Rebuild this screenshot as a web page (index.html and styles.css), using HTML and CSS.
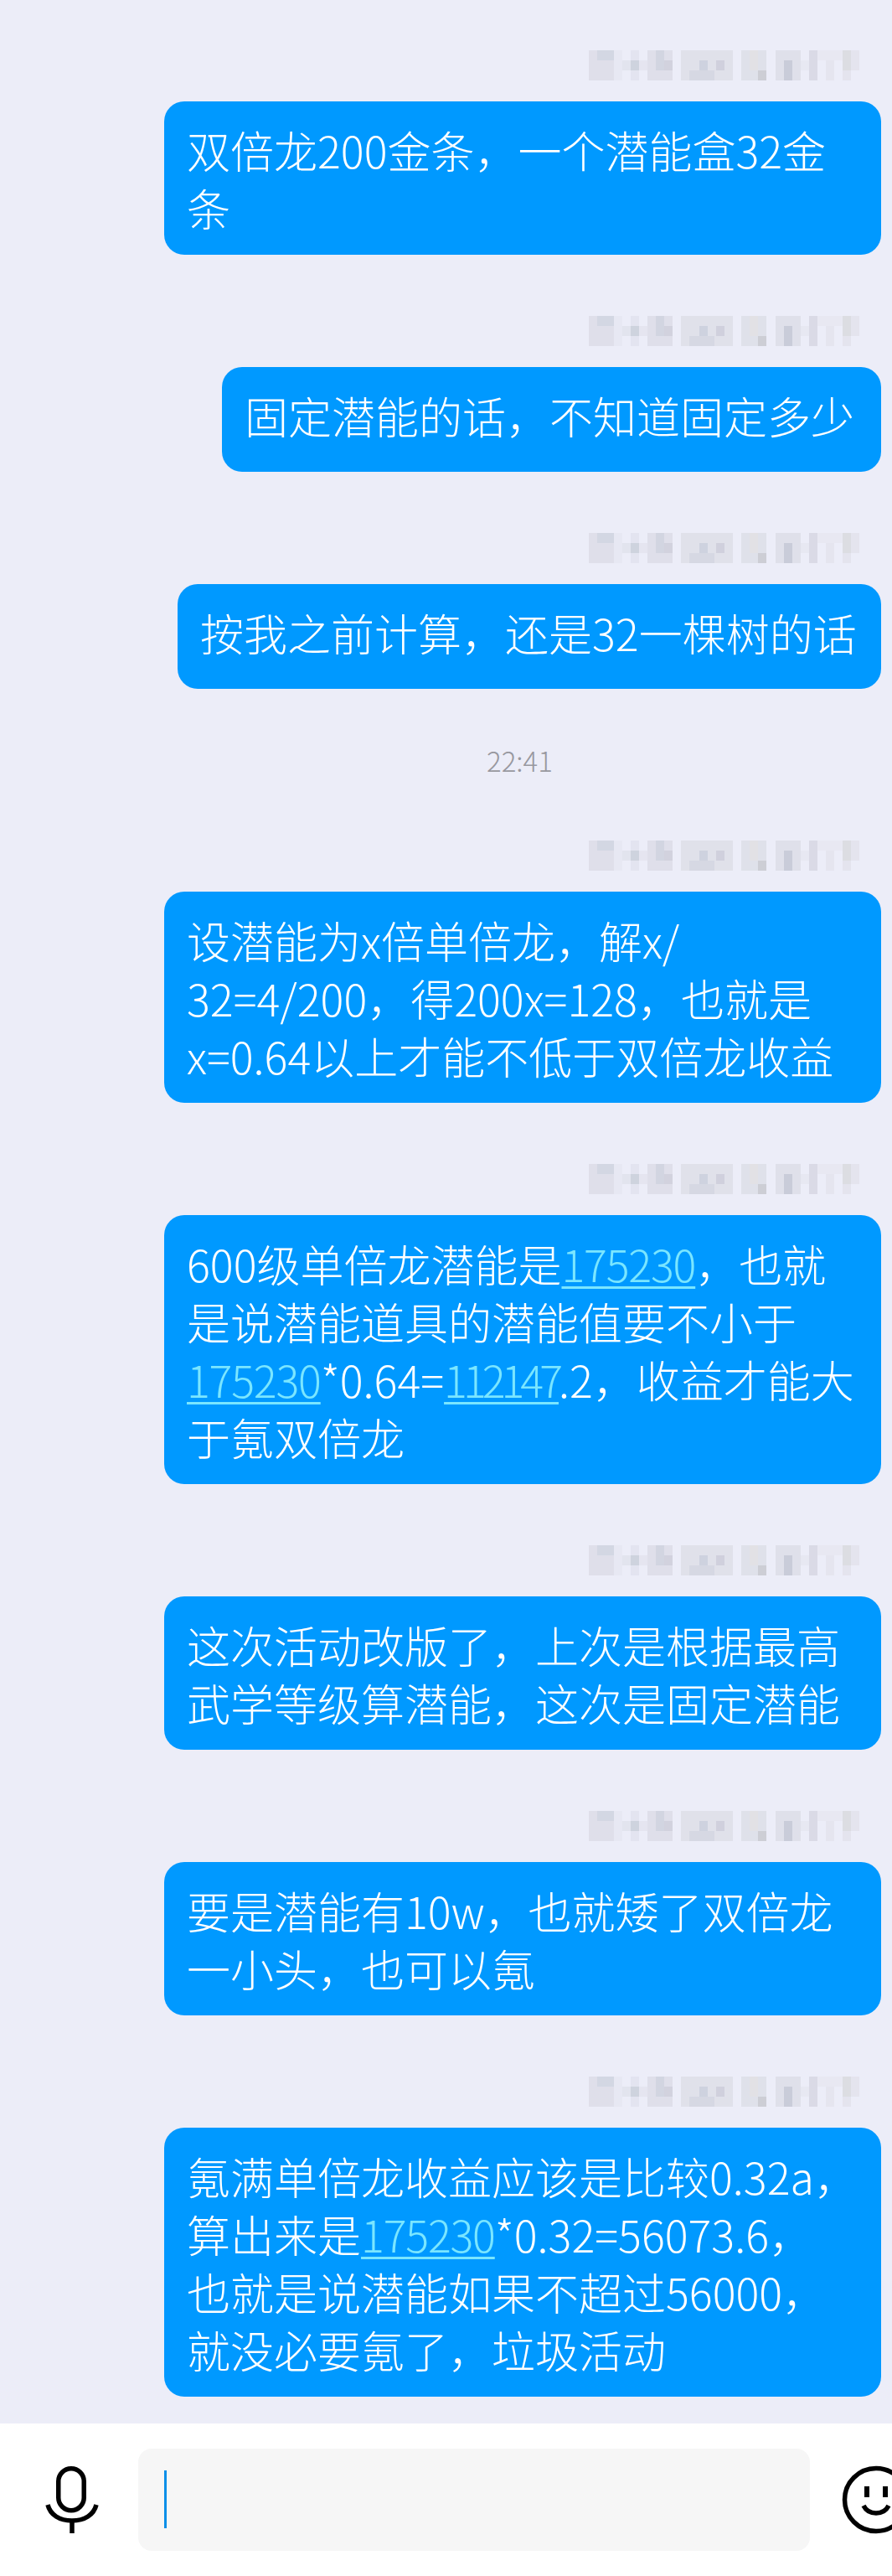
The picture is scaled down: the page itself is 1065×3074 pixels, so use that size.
FILE: index.html
```html
<!DOCTYPE html>
<html lang="zh-CN">
<head>
    <meta charset="UTF-8">
    <title>Chat</title>
    <link rel="stylesheet" href="styles.css">
</head>
<body>
    <svg class="defs" width="0" height="0">
        <symbol id="mosaic" viewBox="0 0 324 36">
            <rect x="0" y="0" width="30" height="36" fill="#dfdfea"/>
            <rect x="10" y="0" width="20" height="12" fill="#d3d7e3"/>
            <rect x="30" y="0" width="10" height="36" fill="#e7e8f3"/>
            <rect x="50" y="0" width="10" height="36" fill="#e3e4f0"/>
            <rect x="40" y="12" width="10" height="12" fill="#e2e4ee"/>
            <rect x="50" y="12" width="10" height="12" fill="#ced3de"/>
            <rect x="60" y="12" width="10" height="12" fill="#e5e5f0"/>
            <rect x="70" y="0" width="30" height="36" fill="#dfdfea"/>
            <rect x="80" y="0" width="10" height="24" fill="#d2d5e1"/>
            <rect x="90" y="12" width="10" height="12" fill="#d2d2de"/>
            <rect x="110" y="0" width="62" height="36" fill="#e0e1ea"/>
            <rect x="120" y="24" width="30" height="12" fill="#d6d8e3"/>
            <rect x="132" y="12" width="10" height="12" fill="#ced2df"/>
            <rect x="152" y="12" width="10" height="12" fill="#d0d0dd"/>
            <rect x="182" y="0" width="30" height="36" fill="#dfe1ea"/>
            <rect x="192" y="0" width="10" height="24" fill="#e2e1e5"/>
            <rect x="202" y="24" width="10" height="12" fill="#cdced5"/>
            <rect x="223" y="0" width="30" height="36" fill="#dfe0ea"/>
            <rect x="233" y="12" width="10" height="24" fill="#c9ccd9"/>
            <rect x="253" y="12" width="10" height="12" fill="#e7e8f2"/>
            <rect x="263" y="0" width="10" height="36" fill="#dadae6"/>
            <rect x="273" y="0" width="50" height="12" fill="#e8e8f2"/>
            <rect x="303" y="0" width="10" height="24" fill="#dcdde2"/>
            <rect x="283" y="12" width="10" height="24" fill="#e5e5ef"/>
            <rect x="303" y="24" width="10" height="12" fill="#e4e4ee"/>
            <rect x="313" y="0" width="10" height="24" fill="#e4e4ee"/>
        </symbol>
    </svg>

    <main class="chat">
        <div class="msg">
            <svg class="mosaic"><use href="#mosaic"/></svg>
            <div class="bubble bubble-wide">双倍龙200金条，一个潜能盒32金<br>条</div>
        </div>
        <div class="msg">
            <svg class="mosaic"><use href="#mosaic"/></svg>
            <div class="bubble bubble-mid">固定潜能的话，不知道固定多少</div>
        </div>
        <div class="msg">
            <svg class="mosaic"><use href="#mosaic"/></svg>
            <div class="bubble bubble-short">按我之前计算，还是32一棵树的话</div>
        </div>

        <div class="time">22:41</div>

        <div class="msg">
            <svg class="mosaic"><use href="#mosaic"/></svg>
            <div class="bubble bubble-wide">设潜能为x倍单倍龙，解x/<br>32=4/200，得200x=128，也就是<br>x=0.64以上才能不低于双倍龙收益</div>
        </div>
        <div class="msg">
            <svg class="mosaic"><use href="#mosaic"/></svg>
            <div class="bubble bubble-wide">600级单倍龙潜能是<a href="#">175230</a>，也就<br>是说潜能道具的潜能值要不小于<br><a href="#">175230</a>*0.64=<a href="#" class="tight">112147</a>.2，收益才能大<br>于氪双倍龙</div>
        </div>
        <div class="msg">
            <svg class="mosaic"><use href="#mosaic"/></svg>
            <div class="bubble bubble-wide">这次活动改版了，上次是根据最高<br>武学等级算潜能，这次是固定潜能</div>
        </div>
        <div class="msg">
            <svg class="mosaic"><use href="#mosaic"/></svg>
            <div class="bubble bubble-wide">要是潜能有10w，也就矮了双倍龙<br>一小头，也可以氪</div>
        </div>
        <div class="msg">
            <svg class="mosaic"><use href="#mosaic"/></svg>
            <div class="bubble bubble-wide">氪满单倍龙收益应该是比较0.32a，<br>算出来是<a href="#">175230</a>*0.32=56073.6，<br>也就是说潜能如果不超过56000，<br>就没必要氪了，垃圾活动</div>
        </div>
    </main>

    <footer class="bar">
        <svg class="icon-mic" viewBox="0 0 64 80" fill="none" stroke="#000" stroke-width="5.5">
            <rect x="15.75" y="2.75" width="30.5" height="50" rx="15.25"/>
            <path d="M3 46C6 58 17 65 32 65S58 58 61 46"/>
            <path d="M32 65V80"/>
        </svg>
        <div class="input"><span class="cursor"></span></div>
        <svg class="icon-smile" viewBox="0 0 84 84" fill="none" stroke="#000">
            <circle cx="42" cy="42" r="37.5" stroke-width="5.5"/>
            <path d="M31 26V39M53 26V39" stroke-width="6"/>
            <path d="M27 49C33 61 51 61 57 49" stroke-width="5.5"/>
        </svg>
    </footer>
</body>
</html>
```

FILE: styles.css
```css
html, body {
    margin: 0;
    padding: 0;
}
body {
    width: 1065px;
    height: 3074px;
    overflow: hidden;
    background-color: #fff;
    font-family: "Noto Sans CJK SC", "Liberation Sans", sans-serif;
}
.defs {
    position: absolute;
}
a {
    color: #7ae6ff;
    letter-spacing: -1.2px;
    text-decoration: underline;
    text-underline-offset: 5px;
    text-decoration-thickness: 2.5px;
}
a.tight {
    letter-spacing: -5px;
}

/* Message list */
.chat {
    height: 2832px;
    padding: 60px 13px 0 0;
    background-color: #ecedf8;
    display: flex;
    flex-direction: column;
    align-items: flex-end;
    overflow: hidden;
}
.msg {
    display: flex;
    flex-direction: column;
    align-items: flex-end;
    margin-bottom: 73px;
}
.mosaic {
    width: 324px;
    height: 36px;
    margin: 0 25px 25px 0;
    display: block;
}
.bubble {
    box-sizing: border-box;
    min-height: 125px;
    padding: 23px 28px 22px 27px;
    background-color: #0099ff;
    border-radius: 24px;
    color: #fff;
    font-size: 52px;
    font-weight: 200;
    line-height: 69px;
    white-space: nowrap;
}
.bubble-wide {
    width: 856px;
}
.bubble-mid {
    width: 787px;
}
.bubble-short {
    width: 840px;
}
.time {
    align-self: flex-start;
    margin: -11px 0 73px 581px;
    color: #98989f;
    font-size: 33px;
    font-weight: 200;
    line-height: 46px;
}

/* Input bar */
.bar {
    height: 182px;
    box-sizing: border-box;
    padding: 30px 0 0 54px;
    background-color: #fff;
    display: flex;
    align-items: flex-start;
    overflow: hidden;
}
.icon-mic {
    width: 64px;
    height: 80px;
    flex: none;
    margin-top: 21px;
}
.input {
    width: 802px;
    height: 122px;
    flex: none;
    margin-left: 47px;
    padding: 26px 0 0 31px;
    box-sizing: border-box;
    background-color: #f6f6f6;
    border-radius: 16px;
}
.cursor {
    display: block;
    width: 3px;
    height: 69px;
    background-color: #0a8fe8;
}
.icon-smile {
    width: 84px;
    height: 84px;
    flex: none;
    margin: 19px 0 0 37px;
}
```
